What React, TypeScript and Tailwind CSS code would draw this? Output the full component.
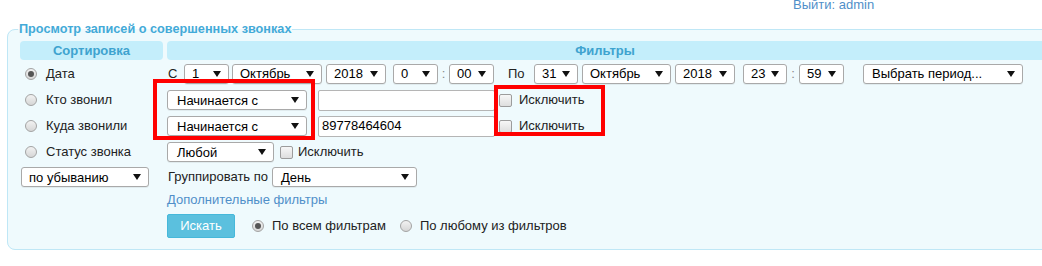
import React from "react";

const FONT = "font-['Liberation_Sans',Arial,sans-serif]";

function Arrow() {
  return (
    <svg width="8" height="6" viewBox="0 0 8 6" className="shrink-0">
      <path d="M0 0 H8 L4 6 Z" fill="#111" />
    </svg>
  );
}

function Select({ value, w, pl = "pl-[7px]", ml = "" }: { value: string; w: string; pl?: string; ml?: string }) {
  return (
    <div
      className={`${w} ${ml} ${pl} h-[20px] shrink-0 flex items-center justify-between pr-[7px] rounded-[3px] border border-[#a9a9a9] bg-white text-[13px] text-black shadow-[0_1px_0_rgba(0,0,0,0.06)]`}
    >
      <span className="leading-none">{value}</span>
      <Arrow />
    </div>
  );
}

function Radio({ checked = false }: { checked?: boolean }) {
  return (
    <span className="w-[12px] h-[12px] shrink-0 rounded-full border border-[#a3a3a3] bg-gradient-to-b from-[#f2f2f2] to-[#d6d6d6] flex items-center justify-center">
      {checked && <span className="w-[6px] h-[6px] rounded-full bg-[#555]" />}
    </span>
  );
}

function Check({ ml }: { ml: string }) {
  return (
    <span className={`${ml} block w-[13px] h-[13px] shrink-0 rounded-[2px] border border-[#9c9c9c] bg-gradient-to-b from-[#f7f7f7] to-[#dedede]`} />
  );
}

function TextInput({ value = "" }: { value?: string }) {
  return (
    <div className="w-[177px] h-[21px] ml-[11px] shrink-0 flex items-center pl-[3px] rounded-[2px] border border-[#b5b5b5] bg-white text-[13px] text-black">
      {value}
    </div>
  );
}

function SortItem({ label, checked = false }: { label: string; checked?: boolean }) {
  return (
    <div className="w-[143px] shrink-0 flex items-center pl-[5px] gap-[9px]">
      <Radio checked={checked} />
      <span>{label}</span>
    </div>
  );
}

export default function App() {
  return (
    <div className={`${FONT} relative w-[1042px] h-[266px] overflow-hidden bg-white text-[13px] text-[#222]`}>
      {/* top bar */}
      <div className="h-[20px] relative">
        <span className="absolute left-[793px] top-[-5px] text-[13px] text-[#4f8fc9]">Выйти: admin</span>
      </div>

      <fieldset className="ml-[7px] w-[1060px] rounded-[8px] border border-[#bfe7f6] bg-[#effafd] pl-[12px] pt-[2px] pb-[11px]">
        <legend className="ml-[-2px] px-[1px] text-[12.7px] font-bold text-[#43aad8]">Просмотр записей о совершенных звонках</legend>

        {/* headers */}
        <div className="flex gap-[4px] h-[19px]">
          <div className="w-[143px] rounded-[4px] bg-[#c4eefb] flex items-center justify-center font-bold text-[#3ea3cf]">Сортировка</div>
          <div className="w-[876px] rounded-l-[4px] bg-[#c4eefb] flex items-center justify-center font-bold text-[#3ea3cf]">Фильтры</div>
        </div>

        {/* row 1 */}
        <div className="flex items-center h-[27px]">
          <SortItem label="Дата" checked />
          <div className="flex items-center pl-[5px]">
            <span className="w-[11px]">С</span>
            <Select value="1" w="w-[45px]" ml="ml-[5px]" />
            <Select value="Октябрь" w="w-[90px]" ml="ml-[3px]" />
            <Select value="2018" w="w-[60px]" ml="ml-[4px]" />
            <Select value="0" w="w-[45px]" ml="ml-[7px]" />
            <span className="w-[11px] text-center text-[#888]">:</span>
            <Select value="00" w="w-[45px]" />
            <span className="ml-[14px] w-[26px]">По</span>
            <Select value="31" w="w-[44px]" />
            <Select value="Октябрь" w="w-[89px]" ml="ml-[4px]" />
            <Select value="2018" w="w-[60px]" ml="ml-[4px]" />
            <Select value="23" w="w-[44px]" ml="ml-[8px]" />
            <span className="w-[12px] text-center text-[#888]">:</span>
            <Select value="59" w="w-[45px]" />
            <Select value="Выбрать период..." w="w-[160px]" ml="ml-[19px]" pl="pl-[8px]" />
          </div>
        </div>

        {/* row 2 */}
        <div className="flex items-center h-[26px]">
          <SortItem label="Кто звонил" />
          <div className="flex items-center pl-[4px]">
            <Select value="Начинается с" w="w-[140px]" pl="pl-[9px]" />
            <TextInput />
            <Check ml="ml-[4px]" />
            <span className="ml-[7px]">Исключить</span>
          </div>
        </div>

        {/* row 3 */}
        <div className="flex items-center h-[26px]">
          <SortItem label="Куда звонили" />
          <div className="flex items-center pl-[4px]">
            <Select value="Начинается с" w="w-[140px]" pl="pl-[9px]" />
            <TextInput value="89778464604" />
            <Check ml="ml-[4px]" />
            <span className="ml-[7px]">Исключить</span>
          </div>
        </div>

        {/* row 4 */}
        <div className="flex items-center h-[26px]">
          <SortItem label="Статус звонка" />
          <div className="flex items-center pl-[4px]">
            <Select value="Любой" w="w-[107px]" pl="pl-[9px]" />
            <Check ml="ml-[6px]" />
            <span className="ml-[5px]">Исключить</span>
          </div>
        </div>

        {/* row 5 */}
        <div className="flex items-center h-[24px]">
          <div className="w-[143px] shrink-0 flex items-center">
            <Select value="по убыванию" w="w-[128px]" pl="pl-[7px]" ml="ml-[1px]" />
          </div>
          <div className="flex items-center pl-[5px]">
            <span className="w-[104px]">Группировать по</span>
            <Select value="День" w="w-[145px]" pl="pl-[8px]" />
          </div>
        </div>

        {/* link */}
        <div className="flex items-center h-[22px] pl-[147px]">
          <span className="text-[#4f8fc9]">Дополнительные фильтры</span>
        </div>

        {/* search */}
        <div className="flex items-center h-[24px] mt-[3px] pl-[147px]">
          <button className="w-[68px] h-[24px] rounded-[2px] border border-[#46b8da] bg-[#5bc0de] text-white text-[13px]">Искать</button>
          <span className="ml-[17px]"><Radio checked /></span>
          <span className="ml-[8px]">По всем фильтрам</span>
          <span className="ml-[14px]"><Radio /></span>
          <span className="ml-[8px]">По любому из фильтров</span>
        </div>
      </fieldset>

      {/* red annotation boxes */}
      <div className="absolute left-[153px] top-[79px] w-[162px] h-[61px] border-[4px] border-[#ff0000]" />
      <div className="absolute left-[494px] top-[85px] w-[111px] h-[51px] border-[4px] border-[#ff0000]" />
    </div>
  );
}
